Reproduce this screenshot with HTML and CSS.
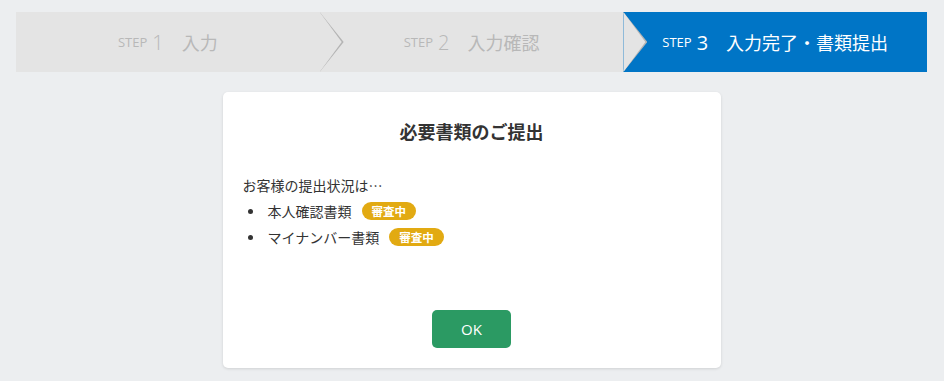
FILE: index.html
```html
<html lang="ja">
<head>
    <meta charset="UTF-8">
    <meta name="viewport" content="width=device-width, initial-scale=1.0"/>
    <title>書類提出</title>
    <link rel="stylesheet" href="styles.css">
</head>
<body>
<div class="steps">
    <div class="step">
        <span class="step-label">STEP</span><span class="step-num">1</span><span class="step-name">入力</span>
    </div>
    <div class="step">
        <span class="step-label">STEP</span><span class="step-num">2</span><span class="step-name">入力確認</span>
    </div>
    <div class="step current">
        <span class="step-label">STEP</span><span class="step-num">3</span><span class="step-name">入力完了・書類提出</span>
    </div>
</div>
<div class="card">
    <h2>必要書類のご提出</h2>
    <p class="status">お客様の提出状況は…</p>
    <ul class="docs">
        <li>本人確認書類<span class="badge">審査中</span></li>
        <li>マイナンバー書類<span class="badge">審査中</span></li>
    </ul>
    <div class="actions">
        <button class="ok">OK</button>
    </div>
</div>
</body>
</html>
```

FILE: styles.css
```css
body {
    margin: 0;
    padding: 12px 17px 0 16px;
    background-color: #eceef0;
    font-family: "Noto Sans CJK JP", "Noto Sans", sans-serif;
    color: #333;
}
.steps {
    display: flex;
    height: 60px;
}
.step {
    flex: 1;
    position: relative;
    display: flex;
    justify-content: center;
    align-items: center;
    background-color: #e4e4e4;
    color: #b8b8b8;
}
.step:not(:last-child)::before,
.step:not(:last-child)::after {
    content: "";
    position: absolute;
    top: 0;
    left: 100%;
    width: 24px;
    height: 60px;
    z-index: 1;
}
.step:not(:last-child)::before {
    background-color: #b4b4b4;
    clip-path: polygon(0 0, 24px 30px, 0 60px, 0 58px, 21px 30px, 0 2px);
    filter: blur(0.6px);
}
.step:not(:last-child)::after {
    background-color: #e4e4e4;
    clip-path: polygon(0 0, 22px 30px, 0 60px);
    z-index: 2;
}
.step-label {
    font-family: "Open Sans", "Noto Sans", sans-serif;
    font-size: 13px;
    margin-right: 5px;
}
.step-num {
    font-family: "Open Sans", "Noto Sans", sans-serif;
    font-size: 20px;
    font-weight: 300;
    margin-right: 18px;
}
.step-name {
    font-size: 18px;
}
.current {
    background-color: #0075c6;
    color: #fff;
}
.current .step-num {
    font-weight: 400;
}
.card {
    width: 498px;
    margin: 20px auto 0;
    box-sizing: border-box;
    padding: 28px 20px 20px;
    background-color: #fff;
    border-radius: 5px;
    box-shadow: 0 1px 3px rgba(0, 0, 0, 0.12);
}
h2 {
    margin: 0;
    font-size: 18px;
    line-height: 22px;
    text-align: center;
    color: #333;
}
.status {
    margin: 30px 0 0;
    font-size: 14px;
    line-height: 26px;
}
.docs {
    margin: 0;
    padding: 0;
    list-style: none;
    font-size: 14px;
    line-height: 26px;
}
.docs li::before {
    content: "";
    display: inline-block;
    width: 5px;
    height: 5px;
    margin: 0 15px 0 5px;
    border-radius: 50%;
    background-color: #333;
    vertical-align: 3px;
}
.badge {
    display: inline-block;
    margin-left: 10px;
    padding: 0 10px;
    height: 18px;
    line-height: 18px;
    border-radius: 9px;
    background-color: #e2aa12;
    color: #fff;
    font-size: 11.5px;
    font-weight: bold;
    vertical-align: 1px;
}
.actions {
    display: flex;
    justify-content: center;
    margin-top: 60px;
}
.ok {
    width: 79px;
    height: 38px;
    border: none;
    border-radius: 5px;
    background-color: #2b9a63;
    color: #fff;
    font-family: "Open Sans", "Noto Sans", sans-serif;
    font-size: 15px;
    cursor: pointer;
}
```
